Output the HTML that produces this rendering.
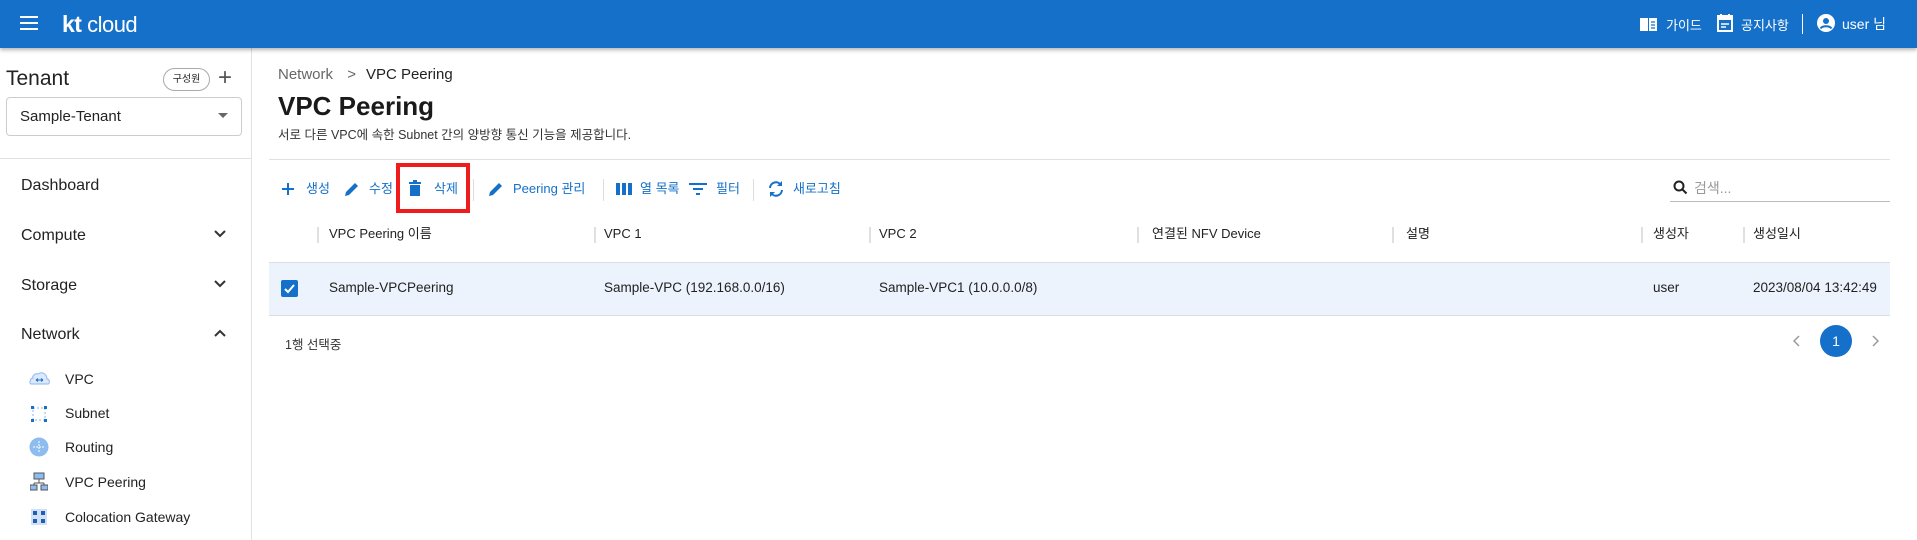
<!DOCTYPE html>
<html><head><meta charset="utf-8"><style>
*{margin:0;padding:0;box-sizing:border-box}
body{width:1917px;height:540px;overflow:hidden;background:#fff;font-family:"Liberation Sans","Noto Sans CJK KR",sans-serif;color:#222;position:relative}
.a{position:absolute;white-space:nowrap}
.hdr{position:absolute;left:0;top:0;width:1917px;height:48px;background:#1570c9;box-shadow:0 2px 4px rgba(0,0,0,.3);z-index:2}
.w{color:#fff}
.sb{position:absolute;left:251px;top:48px;width:1px;height:492px;background:#e2e2e2}
.menu{font-size:16px;color:#222}
.sub{font-size:14px;color:#222}
.tb{font-size:13px;color:#1570c9;top:180px;line-height:18px;height:18px}
.th{font-size:13px;color:#222;top:225px;line-height:18px;height:18px}
.td{font-size:13.5px;color:#222;top:279px;line-height:18px}
.sep{position:absolute;width:2px;height:16px;background:#e0e0e0;top:227px}
.tsep{position:absolute;width:1px;height:22px;background:#ddd;top:179px}
</style></head><body>
<div class="hdr">
 <svg class="a" style="left:20px;top:16px" width="18" height="14"><rect y="0" width="18" height="2" fill="#fff"/><rect y="6" width="18" height="2" fill="#fff"/><rect y="12" width="18" height="2" fill="#fff"/></svg>
 <div class="a w" style="left:62px;top:11px;font-size:22px;letter-spacing:-0.5px"><b style="font-size:23px">kt</b> cloud</div>
 <svg class="a" style="left:1639px;top:15px" width="20" height="18"><path d="M1 3h8v13H1z M10 3h8v13h-8z" fill="#fff"/><path d="M12 7h4M12 10h4M12 13h4" stroke="#1570c9" stroke-width="1.3"/></svg>
 <div class="a w" style="left:1666px;top:15px;font-size:13px">가이드</div>
 <svg class="a" style="left:1716px;top:13px" width="18" height="20"><rect x="2" y="3" width="14" height="15" fill="none" stroke="#fff" stroke-width="2"/><rect x="2" y="3" width="14" height="4" fill="#fff"/><path d="M5 1v4M13 1v4" stroke="#fff" stroke-width="2"/><path d="M5 11h8M5 14h5" stroke="#fff" stroke-width="1.5"/></svg>
 <div class="a w" style="left:1741px;top:15px;font-size:13px">공지사항</div>
 <div class="a" style="left:1802px;top:14px;width:1px;height:20px;background:#fff"></div>
 <svg class="a" style="left:1817px;top:14px" width="18" height="18"><circle cx="9" cy="9" r="9" fill="#fff"/><circle cx="9" cy="7" r="3" fill="#1570c9"/><path d="M3.5 14.5c2-3 9-3 11 0" stroke="#1570c9" stroke-width="2" fill="none"/></svg>
 <div class="a w" style="left:1842px;top:14px;font-size:14px">user 님</div>
</div>
<div class="sb"></div>
<div class="a" style="left:6px;top:67px;font-size:21px;color:#222">Tenant</div>
<div class="a" style="left:163px;top:68px;width:47px;height:23px;border:1px solid #aaa;border-radius:12px;font-size:10px;text-align:center;line-height:21px">구성원</div>
<div class="a" style="left:218px;top:64px;font-size:24px;color:#555;font-weight:300">+</div>
<div class="a" style="left:6px;top:97px;width:236px;height:39px;border:1px solid #ccc;border-radius:4px"></div>
<div class="a" style="left:20px;top:108px;font-size:15px">Sample-Tenant</div>
<svg class="a" style="left:218px;top:113px" width="10" height="6"><path d="M0 0h10L5 5z" fill="#666"/></svg>
<div class="a" style="left:0;top:158px;width:251px;height:1px;background:#e2e2e2"></div>
<div class="a menu" style="left:21px;top:177px">Dashboard</div>
<div class="a menu" style="left:21px;top:227px">Compute</div>
<div class="a menu" style="left:21px;top:277px">Storage</div>
<div class="a menu" style="left:21px;top:326px">Network</div>
<svg class="a" style="left:214px;top:230px" width="12" height="8"><path d="M1 1l5 5 5-5" stroke="#333" stroke-width="2" fill="none"/></svg>
<svg class="a" style="left:214px;top:280px" width="12" height="8"><path d="M1 1l5 5 5-5" stroke="#333" stroke-width="2" fill="none"/></svg>
<svg class="a" style="left:214px;top:329px" width="12" height="8"><path d="M1 7l5-5 5 5" stroke="#333" stroke-width="2" fill="none"/></svg>
<svg class="a" style="left:29px;top:370px" width="21" height="15"><path d="M2 14h17c2 0 2-5-1-5 0-5-5-8-9-5-3-1-6 2-5 4-3 0-4 6-2 6z" fill="#dbe9fb" stroke="#8db6ea"/><path d="M7 10h7M7 10l2-1.5M7 10l2 1.5M14 10l-2-1.5M14 10l-2 1.5" stroke="#1570c9"/></svg>
<div class="a sub" style="left:65px;top:371px">VPC</div>
<svg class="a" style="left:30px;top:405px" width="18" height="18"><rect x="3" y="3" width="12" height="12" fill="none" stroke="#8db6ea" stroke-dasharray="2 2"/><g fill="#1570c9"><rect x="1" y="1" width="3" height="3"/><rect x="14" y="1" width="3" height="3"/><rect x="1" y="14" width="3" height="3"/><rect x="14" y="14" width="3" height="3"/></g></svg>
<div class="a sub" style="left:65px;top:405px">Subnet</div>
<svg class="a" style="left:29px;top:437px" width="20" height="20"><circle cx="10" cy="10" r="9.5" fill="#8dbcf0"/><path d="M10 4v12M4 10h12" stroke="#fff" stroke-width="1" stroke-dasharray="2 1"/></svg>
<div class="a sub" style="left:65px;top:439px">Routing</div>
<svg class="a" style="left:30px;top:472px" width="18" height="20"><rect x="4" y="1" width="10" height="6" fill="#8dbcf0" stroke="#555"/><path d="M9 7v4M4 11h10M4 11v3M14 11v3" stroke="#555"/><rect x="0" y="13" width="7" height="5" fill="#8dbcf0" stroke="#555"/><rect x="11" y="13" width="7" height="5" fill="#8dbcf0" stroke="#555"/></svg>
<div class="a sub" style="left:65px;top:474px">VPC Peering</div>
<svg class="a" style="left:31px;top:509px" width="16" height="16"><rect width="16" height="16" fill="#cfe0f7"/><g fill="#1f5fb0"><rect x="2" y="2" width="4" height="4"/><rect x="10" y="2" width="4" height="4"/><rect x="2" y="10" width="4" height="4"/><rect x="10" y="10" width="4" height="4"/></g></svg>
<div class="a sub" style="left:65px;top:509px">Colocation Gateway</div>

<div class="a" style="left:278px;top:66px;font-size:15px;color:#666">Network <span style="margin:0 10px">&gt;</span><span style="color:#222">VPC Peering</span></div>
<div class="a" style="left:278px;top:91px;font-size:26px;font-weight:bold;color:#1a1a1a">VPC Peering</div>
<div class="a" style="left:278px;top:124px;font-size:12.5px;color:#333">서로 다른 VPC에 속한 Subnet 간의 양방향 통신 기능을 제공합니다.</div>
<div class="a" style="left:269px;top:159px;width:1621px;height:1px;background:#e0e0e0"></div>

<svg class="a" style="left:281px;top:182px" width="14" height="14"><path d="M7 1v12M1 7h12" stroke="#1570c9" stroke-width="2"/></svg>
<div class="a tb" style="left:306px">생성</div>
<svg class="a" style="left:343px;top:180px" width="18" height="18"><path d="M2 16l1-4 9-9 3 3-9 9z" fill="#1570c9"/></svg>
<div class="a tb" style="left:369px">수정</div>
<svg class="a" style="left:408px;top:180px" width="14" height="17"><path d="M1 3h12M5 1h4" stroke="#1570c9" stroke-width="2"/><path d="M2 5h10v11H2z" fill="#1570c9"/></svg>
<div class="a tb" style="left:434px">삭제</div>
<div class="a" style="left:396px;top:163px;width:74px;height:50px;border:4px solid #ee1c1c"></div>
<div class="tsep" style="left:473px"></div>
<svg class="a" style="left:487px;top:180px" width="18" height="18"><path d="M2 16l1-4 9-9 3 3-9 9z" fill="#1570c9"/></svg>
<div class="a tb" style="left:513px">Peering 관리</div>
<div class="tsep" style="left:603px"></div>
<svg class="a" style="left:616px;top:183px" width="16" height="12"><g fill="#1570c9"><rect x="0" width="4" height="12"/><rect x="6" width="4" height="12"/><rect x="12" width="4" height="12"/></g></svg>
<div class="a tb" style="left:640px">열 목록</div>
<svg class="a" style="left:689px;top:183px" width="18" height="12"><path d="M0 1h18M4 6h10M7 11h4" stroke="#1570c9" stroke-width="2"/></svg>
<div class="a tb" style="left:716px">필터</div>
<div class="tsep" style="left:753px"></div>
<svg class="a" style="left:767px;top:180px" width="18" height="18"><path d="M3 8a6 6 0 0 1 11-3M15 10a6 6 0 0 1-11 3" stroke="#1570c9" stroke-width="2" fill="none"/><path d="M15 1v5h-5zM3 17v-5h5z" fill="#1570c9"/></svg>
<div class="a tb" style="left:793px">새로고침</div>

<svg class="a" style="left:1673px;top:180px" width="15" height="15"><circle cx="6" cy="6" r="4.5" stroke="#222" stroke-width="2" fill="none"/><path d="M9.5 9.5l4 4" stroke="#222" stroke-width="2"/></svg>
<div class="a" style="left:1694px;top:178px;font-size:14px;color:#999">검색...</div>
<div class="a" style="left:1670px;top:201px;width:220px;height:1px;background:#bbb"></div>

<div class="sep" style="left:317px"></div><div class="sep" style="left:594px"></div><div class="sep" style="left:869px"></div><div class="sep" style="left:1137px"></div><div class="sep" style="left:1392px"></div><div class="sep" style="left:1641px"></div><div class="sep" style="left:1743px"></div>
<div class="a th" style="left:329px">VPC Peering 이름</div>
<div class="a th" style="left:604px">VPC 1</div>
<div class="a th" style="left:879px">VPC 2</div>
<div class="a th" style="left:1152px">연결된 NFV Device</div>
<div class="a th" style="left:1406px">설명</div>
<div class="a th" style="left:1653px">생성자</div>
<div class="a th" style="left:1753px">생성일시</div>
<div class="a" style="left:269px;top:262px;width:1621px;height:54px;background:#ecf3fc;border-top:1px solid #ddd;border-bottom:1px solid #ddd"></div>
<svg class="a" style="left:281px;top:280px" width="17" height="17"><rect width="17" height="17" rx="2" fill="#1570c9"/><path d="M4 9l3 3 6-7" stroke="#fff" stroke-width="2" fill="none"/></svg>
<div class="a td" style="left:329px">Sample-VPCPeering</div>
<div class="a td" style="left:604px">Sample-VPC (192.168.0.0/16)</div>
<div class="a td" style="left:879px">Sample-VPC1 (10.0.0.0/8)</div>
<div class="a td" style="left:1653px">user</div>
<div class="a td" style="left:1753px">2023/08/04 13:42:49</div>
<div class="a" style="left:285px;top:334px;font-size:12.5px;color:#333">1행 선택중</div>
<svg class="a" style="left:1793px;top:335px" width="8" height="12"><path d="M6 1L1 6l5 5" stroke="#999" stroke-width="1.5" fill="none"/></svg>
<div class="a" style="left:1820px;top:325px;width:32px;height:32px;border-radius:16px;background:#1570c9;color:#fff;font-size:14px;text-align:center;line-height:32px">1</div>
<svg class="a" style="left:1871px;top:335px" width="8" height="12"><path d="M2 1l5 5-5 5" stroke="#999" stroke-width="1.5" fill="none"/></svg>
</body></html>
